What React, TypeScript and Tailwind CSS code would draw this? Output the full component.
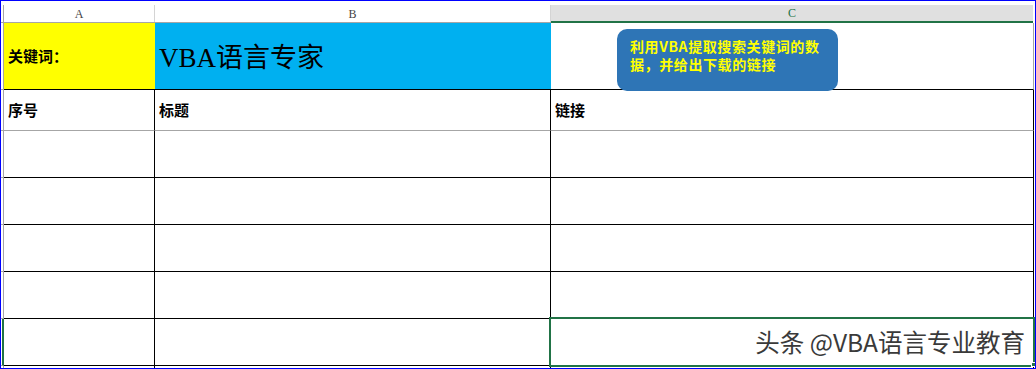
import React from 'react'

// Excel-like sheet: keyword search template with a callout note
const cjk = "font-['Noto_Sans_CJK_SC','Liberation_Sans',sans-serif]"

function Gutter({ selected = false }: { selected?: boolean }) {
  return (
    <div
      className={`w-[3px] shrink-0 border-b border-[#a6a6a6] ${
        selected ? 'border-r-2 border-r-[#217346]' : 'border-r border-r-[#a6a6a6]'
      }`}
    />
  )
}

function BodyRow({ selected = false }: { selected?: boolean }) {
  return (
    <div className="flex h-[47px] shrink-0">
      <Gutter selected={selected} />
      <div className="w-[151px] shrink-0 border-r border-b border-black" />
      <div className="w-[396px] shrink-0 border-r border-b border-black" />
      <div className="w-[483px] shrink-0 border-r border-b border-black" />
      <div className="w-[1px]" />
    </div>
  )
}

export default function App() {
  return (
    <div className="relative w-[1036px] h-[369px] overflow-hidden border border-[#0000ff] bg-white flex flex-col">
      {/* column header */}
      <div className="flex h-[22px] shrink-0">
        <div className="w-[3px] shrink-0 pt-[4px] border-b border-[#a6a6a6]">
          <div className="h-full border-r border-[#a6a6a6]" />
        </div>
        <div className="w-[151px] shrink-0 pt-[4px] border-b border-[#a6a6a6]">
          <div className="h-full border-r border-[#d4d4d4] flex items-center justify-center text-[12px] leading-none text-[#444] font-['Liberation_Serif',serif]">
            A
          </div>
        </div>
        <div className="w-[396px] shrink-0 pt-[4px] border-b border-[#a6a6a6]">
          <div className="h-full border-r border-[#d4d4d4] flex items-center justify-center text-[12px] leading-none text-[#444] font-['Liberation_Serif',serif]">
            B
          </div>
        </div>
        <div className="w-[483px] shrink-0 pt-[4px]">
          <div className="h-full mr-[1px] bg-[#e0e0e0] border-b-2 border-[#217346] flex items-center justify-center text-[12px] leading-none text-[#217346] font-['Liberation_Serif',serif]">
            C
          </div>
        </div>
        <div className="w-[1px]" />
      </div>

      {/* row 1: keyword */}
      <div className="flex h-[67px] shrink-0">
        <Gutter />
        <div className={`w-[151px] shrink-0 bg-[#ffff00] border-b border-black flex items-center pl-[4px] text-[15px] font-bold text-black ${cjk}`}>
          关键词：
        </div>
        <div className="w-[396px] shrink-0 bg-[#00b0f0] border-b border-black flex items-center pl-[4px] pt-[4px] text-[27px] text-black font-['Liberation_Serif','Noto_Sans_CJK_SC',serif]">
          VBA语言专家
        </div>
        <div className="w-[483px] shrink-0 border-b border-black border-r border-r-[#a6a6a6]" />
        <div className="w-[1px]" />
      </div>

      {/* row 2: headers */}
      <div className={`flex h-[41px] shrink-0 text-[15px] font-bold text-black ${cjk}`}>
        <Gutter />
        <div className="w-[151px] shrink-0 border-r border-black border-b border-b-[#a6a6a6] flex items-center pl-[4px]">
          序号
        </div>
        <div className="w-[396px] shrink-0 border-r border-black border-b border-b-[#a6a6a6] flex items-center pl-[4px]">
          标题
        </div>
        <div className="w-[483px] shrink-0 border-r border-black border-b border-b-[#a6a6a6] flex items-center pl-[4px]">
          链接
        </div>
        <div className="w-[1px]" />
      </div>

      <BodyRow />
      <BodyRow />
      <BodyRow />
      <BodyRow />
      <BodyRow selected />
      <div className="flex flex-1">
        <div className="w-[3px] shrink-0 border-r border-[#a6a6a6]" />
        <div className="w-[151px] shrink-0 border-r border-black" />
        <div className="w-[396px] shrink-0 border-r border-black" />
        <div className="w-[483px] shrink-0 border-r border-black" />
      </div>

      {/* callout note */}
      <div className={`absolute left-[616px] top-[28px] w-[221px] h-[62px] rounded-[10px] bg-[#2e75b6] pl-[13px] pt-[8px] text-[14px] leading-[18px] tracking-[0.6px] font-bold text-[#ffff00] ${cjk}`}>
        利用VBA提取搜索关键词的数
        <br />
        据，并给出下载的链接
      </div>

      {/* selected cell C7 */}
      <div className="absolute left-[548px] top-[316px] w-[486px] h-[50px] border-2 border-[#217346]" />
      <div className="absolute left-[1030px] top-[361px] w-[5px] h-[5px] bg-[#217346] border border-white" />

      {/* watermark */}
      <div className={`absolute right-[10px] top-[329px] text-[24.5px] leading-none text-[#3a3a3a] [text-shadow:1px_1px_1px_rgba(255,255,255,0.9)] ${cjk}`}>
        头条 @VBA语言专业教育
      </div>
    </div>
  )
}
